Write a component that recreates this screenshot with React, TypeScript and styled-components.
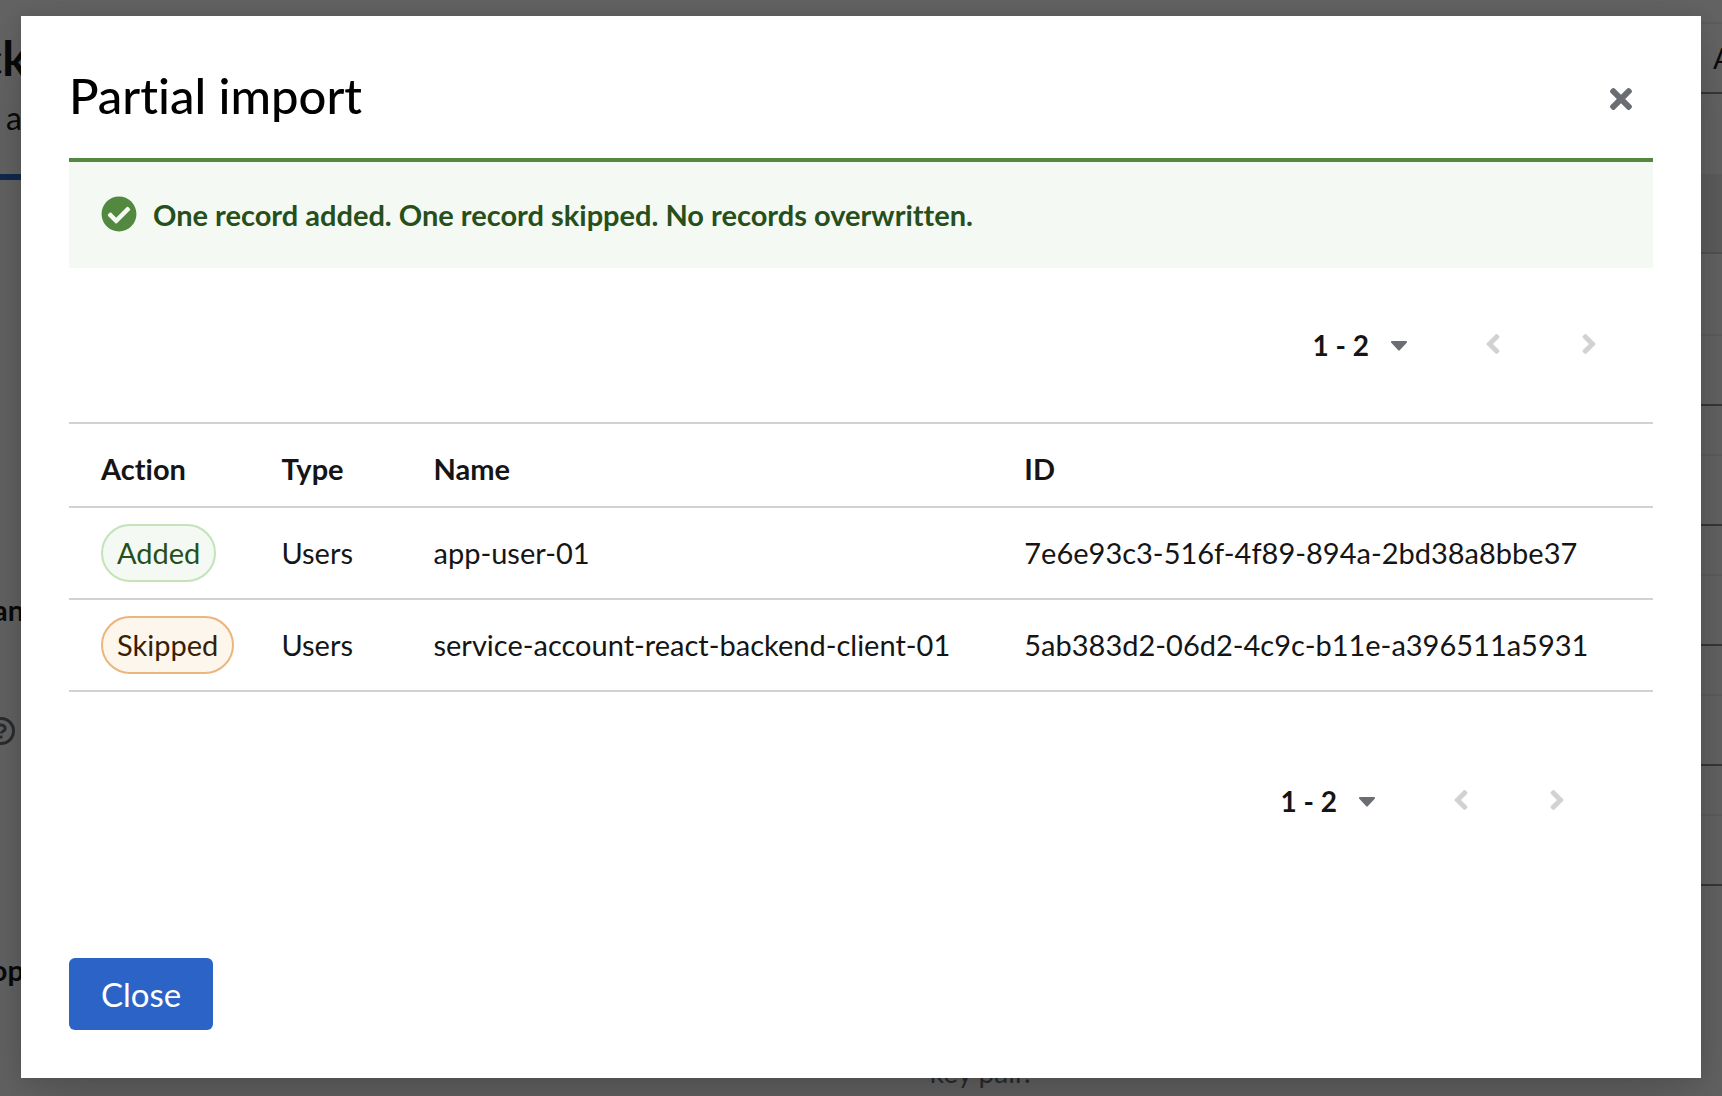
import React from "react";
import styled, { createGlobalStyle, css } from "styled-components";

const GlobalStyle = createGlobalStyle`
  *, *::before, *::after { box-sizing: border-box; }
  body {
    margin: 0;
    color: #151515;
    background: #fff;
    font-family: Lato, "Open Sans", sans-serif;
    font-size: 29px;
    line-height: 42px;
    font-variant-ligatures: none;
  }
  button { font: inherit; color: inherit; border: 0; background: none; cursor: pointer; }
`;

const Shell = styled.div`
  display: grid;
  grid-template-columns: minmax(0, 1fr);
  min-height: 100vh;
  overflow: hidden;
`;

/* Page that stays visible behind the dialog */
const Page = styled.div`
  grid-area: 1 / 1;
  display: grid;
  grid-template-columns: 28px minmax(0, 1fr) 24px;
  height: 0;
  min-height: 100%;
  overflow: hidden;
`;

const LeftEdge = styled.div`
  display: flex;
  flex-direction: column;
  align-items: flex-end;
  padding-top: 26px;
`;

const PageTitle = styled.span`
  font-size: 48px;
  font-weight: 700;
  line-height: 64px;
`;

const PageSubtitle = styled.span`
  font-size: 32px;
  line-height: 48px;
  padding: 4px 6px 0 0;
`;

const TabLine = styled.span`
  width: 100%;
  height: 6px;
  margin-top: 32px;
  background: #2b64c6;
`;

const FieldLabel = styled.span<{ $gap: number }>`
  margin-top: ${(p) => p.$gap}px;
  padding-right: 4px;
  font-weight: 700;
`;

const HelpIcon = styled.svg`
  width: 28px;
  height: 28px;
  flex: none;
  margin: 86px 13px 0 0;
  color: #6a6e73;
`;

const PageMain = styled.div`
  display: flex;
  flex-direction: column;
  justify-content: flex-end;
  padding: 0 0 3px 54%;
  color: #6a6e73;
  font-size: 28px;
`;

const RightEdge = styled.div`
  display: flex;
  flex-direction: column;
  gap: 48px;
  padding-top: 22px;
`;

const PageField = styled.div`
  flex: none;
  height: 72px;
  padding: 13px 0 0 15px;
  border-top: 2px solid #f0f0f0;
  border-bottom: 2px solid #8a8d90;
`;

const PageBand = styled.div`
  flex: none;
  height: 80px;
  margin: 32px 0;
  background: #f0f0f0;
  border-bottom: 2px solid #d2d2d2;
`;

const Backdrop = styled.div`
  grid-area: 1 / 1;
  z-index: 1;
  display: flex;
  align-items: flex-start;
  padding: 16px 21px 18px;
  background: rgba(3, 3, 3, 0.62);
`;

const Dialog = styled.section`
  flex: 1;
  min-width: 0;
  padding: 48px;
  background: #fff;
  box-shadow: 0 32px 64px rgba(3, 3, 3, 0.16), 0 0 16px rgba(3, 3, 3, 0.1);
`;

const DialogHeader = styled.header`
  display: flex;
  justify-content: space-between;
  align-items: flex-end;
  margin-bottom: 32px;
`;

const Title = styled.h1`
  margin: 0;
  color: #000;
  font-size: 49px;
  font-weight: 500;
  line-height: 62px;
`;

const CloseIconButton = styled.button`
  display: flex;
  align-items: center;
  justify-content: center;
  width: 64px;
  height: 54px;
  padding: 0;
  color: #6a6e73;
`;

const Alert = styled.div`
  display: flex;
  gap: 16px;
  padding: 32px;
  color: #264f1b;
  background: #f4f9f4;
  border-top: 4px solid #538841;
  font-weight: 700;
  svg { flex: none; margin-top: 2px; color: #538841; }
`;

const PaginationBar = styled.nav<{ $bottom?: boolean }>`
  display: flex;
  justify-content: flex-end;
  align-items: center;
  padding: 41px 16px;
  ${(p) => p.$bottom && css`padding: 73px 48px 121px;`}
`;

const RangeToggle = styled.button`
  display: flex;
  align-items: center;
  gap: 22px;
  height: 72px;
  padding: 0 38px 0 16px;
  font-size: 28px;
  font-weight: 700;
  svg { margin-top: 2px; color: #6a6e73; }
`;

const PageButton = styled.button`
  display: flex;
  align-items: center;
  justify-content: center;
  width: 96px;
  height: 72px;
  padding: 0 0 2px;
  color: #d2d2d2;
  cursor: default;
`;

const Table = styled.table`
  width: 100%;
  border-collapse: separate;
  border-spacing: 0;
  table-layout: fixed;
  border-top: 2px solid #d2d2d2;
  text-align: left;
`;

const HeadCell = styled.th<{ $width?: string }>`
  width: ${(p) => p.$width ?? "auto"};
  padding: 24px 16px 16px;
  border-bottom: 2px solid #d2d2d2;
  font-weight: 700;
  &:first-child { padding-left: 32px; }
`;

const Cell = styled.td`
  padding: 16px;
  border-bottom: 2px solid #d2d2d2;
  white-space: nowrap;
  &:first-child { padding-left: 32px; }
`;

const tones = {
  green: css`color: #264f1b; background: #f4f9f4; border-color: #c3e4b9;`,
  orange: css`color: #371f04; background: #fdf6ed; border-color: #ebb67c;`,
};

const Label = styled.span<{ $tone: keyof typeof tones }>`
  display: block;
  width: fit-content;
  padding: 6px 14px;
  border: 2px solid;
  border-radius: 30px;
  ${(p) => tones[p.$tone]}
`;

const PrimaryButton = styled.button`
  display: block;
  padding: 12px 32px;
  border-radius: 6px;
  color: #fff;
  background: #2b64c6;
  font-size: 33px;
  line-height: 48px;
`;

const CheckCircle = () => (
  <svg width="36" height="36" viewBox="0 0 512 512" fill="currentColor" aria-hidden="true">
    <path d="M504 256c0 136.967-111.033 248-248 248S8 392.967 8 256 119.033 8 256 8s248 111.033 248 248zM227.314 387.314l184-184c6.248-6.248 6.248-16.379 0-22.627l-22.627-22.627c-6.248-6.249-16.379-6.249-22.628 0L216 308.118l-70.059-70.059c-6.248-6.248-16.379-6.248-22.628 0l-22.627 22.627c-6.248 6.248-6.248 16.379 0 22.627l104 104c6.249 6.249 16.379 6.249 22.628.001z" />
  </svg>
);

const Times = () => (
  <svg width="22" height="32" viewBox="0 0 352 512" fill="currentColor" aria-hidden="true">
    <path d="M242.72 256l100.07-100.07c12.28-12.28 12.28-32.19 0-44.48l-22.24-22.24c-12.28-12.28-32.19-12.28-44.48 0L176 189.28 75.93 89.21c-12.28-12.28-32.19-12.28-44.48 0L9.21 111.45c-12.28 12.28-12.28 32.19 0 44.48L109.28 256 9.21 356.07c-12.28 12.28-12.28 32.19 0 44.48l22.24 22.24c12.28 12.28 32.2 12.28 44.48 0L176 322.72l100.07 100.07c12.28 12.28 32.2 12.28 44.48 0l22.24-22.24c12.28-12.28 12.28-32.19 0-44.48L242.72 256z" />
  </svg>
);

const Caret = () => (
  <svg width="16" height="10" viewBox="0 0 16 10" fill="currentColor" aria-hidden="true">
    <path d="M1 0h14c.9 0 1.300 1 .7 1.700l-7 7.600a1 1 0 0 1-1.400 0l-7-7.600C-.3 1 .1 0 1 0z" />
  </svg>
);

const AngleLeft = () => (
  <svg width="16" height="32" viewBox="0 0 256 512" fill="currentColor" aria-hidden="true">
    <path d="M31.7 239l136-136c9.400-9.400 24.600-9.400 33.900 0l22.600 22.600c9.400 9.400 9.400 24.600 0 33.900L127.900 256l96.400 96.400c9.400 9.400 9.400 24.600 0 33.900L201.700 409c-9.400 9.400-24.600 9.400-33.900 0l-136-136c-9.500-9.400-9.500-24.600-.1-34z" />
  </svg>
);

const AngleRight = () => (
  <svg width="16" height="32" viewBox="0 0 256 512" fill="currentColor" aria-hidden="true">
    <path d="M224.3 273l-136 136c-9.400 9.400-24.600 9.400-33.900 0l-22.600-22.600c-9.400-9.400-9.400-24.600 0-33.900l96.400-96.400-96.400-96.400c-9.400-9.400-9.400-24.600 0-33.900L54.300 103c9.400-9.400 24.600-9.400 33.900 0l136 136c9.500 9.400 9.500 24.600.1 34z" />
  </svg>
);

const Pagination = ({ bottom }: { bottom?: boolean }) => (
  <PaginationBar $bottom={bottom} aria-label={bottom ? "Bottom pagination" : "Top pagination"}>
    <RangeToggle type="button">
      1 - 2
      <Caret />
    </RangeToggle>
    <PageButton type="button" disabled aria-label="Previous page"><AngleLeft /></PageButton>
    <PageButton type="button" disabled aria-label="Next page"><AngleRight /></PageButton>
  </PaginationBar>
);

const records = [
  { action: "Added", tone: "green", type: "Users", name: "app-user-01", id: "7e6e93c3-516f-4f89-894a-2bd38a8bbe37" },
  { action: "Skipped", tone: "orange", type: "Users", name: "service-account-react-backend-client-01", id: "5ab383d2-06d2-4c9c-b11e-a396511a5931" },
] as const;

export default function App() {
  return (
    <>
      <GlobalStyle />
      <Shell>
        <Page aria-hidden="true">
          <LeftEdge>
            <PageTitle>ck</PageTitle>
            <PageSubtitle>a</PageSubtitle>
            <TabLine />
            <FieldLabel $gap={409}>an</FieldLabel>
            <HelpIcon viewBox="0 0 28 28" fill="none" stroke="currentColor" strokeWidth="3">
              <circle cx="14" cy="14" r="12.500" />
              <path d="M10 11.500c.4-2.300 2-3.500 4-3.500 2.300 0 4.200 1.400 4.200 3.400 0 2.700-4 2.800-4 5.200M14 18.500v3" />
            </HelpIcon>
            <FieldLabel $gap={204}>op</FieldLabel>
          </LeftEdge>
          <PageMain>key pair.</PageMain>
          <RightEdge>
            <PageField>A</PageField>
            <PageBand />
            <PageField />
            <PageField />
            <PageField />
            <PageField />
            <PageField />
          </RightEdge>
        </Page>
        <Backdrop>
          <Dialog role="dialog" aria-modal="true" aria-labelledby="dialog-title">
            <DialogHeader>
              <Title id="dialog-title">Partial import</Title>
              <CloseIconButton type="button" aria-label="Close dialog"><Times /></CloseIconButton>
            </DialogHeader>
            <Alert role="status">
              <CheckCircle />
              <span>One record added. One record skipped. No records overwritten.</span>
            </Alert>
            <Pagination />
            <Table>
              <thead>
                <tr>
                  <HeadCell $width="12.4%">Action</HeadCell>
                  <HeadCell $width="9.6%">Type</HeadCell>
                  <HeadCell $width="37.3%">Name</HeadCell>
                  <HeadCell>ID</HeadCell>
                </tr>
              </thead>
              <tbody>
                {records.map((r) => (
                  <tr key={r.id}>
                    <Cell><Label $tone={r.tone}>{r.action}</Label></Cell>
                    <Cell>{r.type}</Cell>
                    <Cell>{r.name}</Cell>
                    <Cell>{r.id}</Cell>
                  </tr>
                ))}
              </tbody>
            </Table>
            <Pagination bottom />
            <PrimaryButton type="button">Close</PrimaryButton>
          </Dialog>
        </Backdrop>
      </Shell>
    </>
  );
}
